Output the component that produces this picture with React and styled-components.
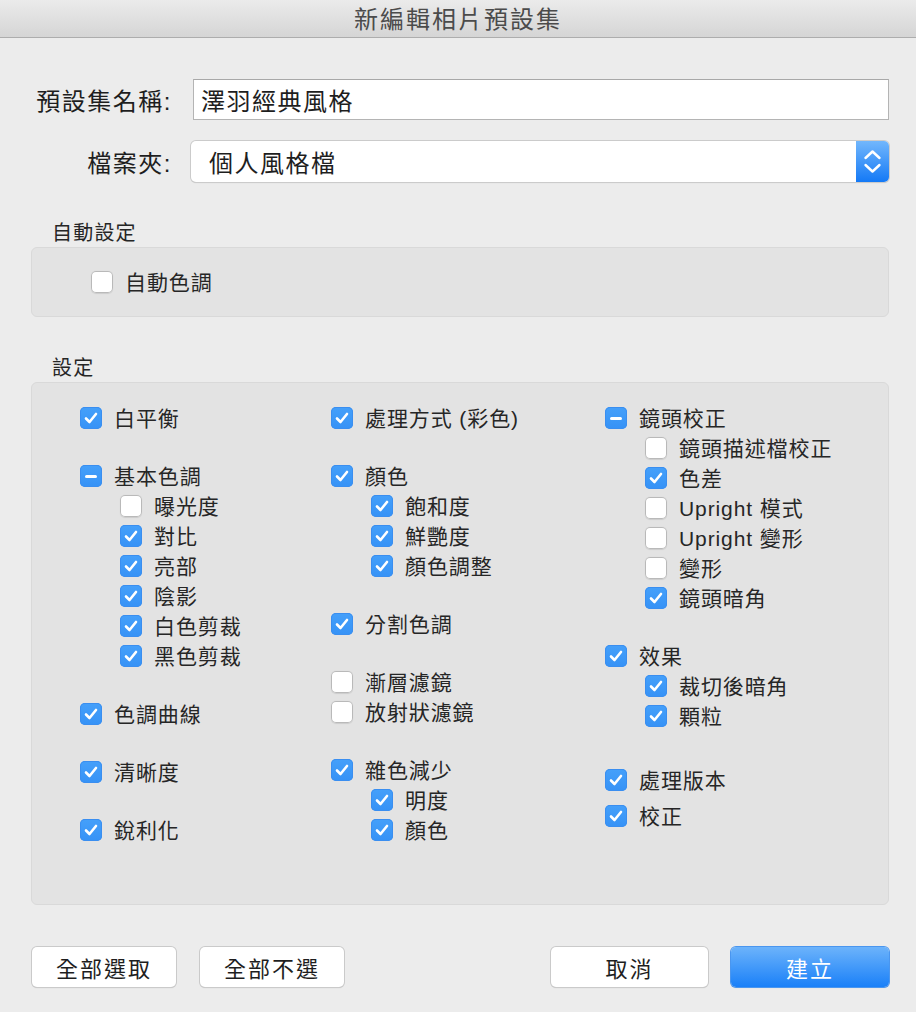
import styled, { createGlobalStyle } from "styled-components";

const GlobalStyle = createGlobalStyle`
    body {
        margin: 0;
        background: #ececec;
    }
    * {
        box-sizing: border-box;
    }
`

const columns = [
    [
        { label: "白平衡", state: "on" },
        { label: "基本色調", state: "mixed", gap: 28 },
        { label: "曝光度", state: "off", sub: true },
        { label: "對比", state: "on", sub: true },
        { label: "亮部", state: "on", sub: true },
        { label: "陰影", state: "on", sub: true },
        { label: "白色剪裁", state: "on", sub: true },
        { label: "黑色剪裁", state: "on", sub: true },
        { label: "色調曲線", state: "on", gap: 28 },
        { label: "清晰度", state: "on", gap: 28 },
        { label: "銳利化", state: "on", gap: 28 },
    ],
    [
        { label: "處理方式 (彩色)", state: "on" },
        { label: "顏色", state: "on", gap: 28 },
        { label: "飽和度", state: "on", sub: true },
        { label: "鮮艷度", state: "on", sub: true },
        { label: "顏色調整", state: "on", sub: true },
        { label: "分割色調", state: "on", gap: 28 },
        { label: "漸層濾鏡", state: "off", gap: 28 },
        { label: "放射狀濾鏡", state: "off" },
        { label: "雜色減少", state: "on", gap: 28 },
        { label: "明度", state: "on", sub: true },
        { label: "顏色", state: "on", sub: true },
    ],
    [
        { label: "鏡頭校正", state: "mixed" },
        { label: "鏡頭描述檔校正", state: "off", sub: true },
        { label: "色差", state: "on", sub: true },
        { label: "Upright 模式", state: "off", sub: true },
        { label: "Upright 變形", state: "off", sub: true },
        { label: "變形", state: "off", sub: true },
        { label: "鏡頭暗角", state: "on", sub: true },
        { label: "效果", state: "on", gap: 28 },
        { label: "裁切後暗角", state: "on", sub: true },
        { label: "顆粒", state: "on", sub: true },
        { label: "處理版本", state: "on", gap: 34 },
        { label: "校正", state: "on", gap: 6 },
    ],
]

function CheckBox({ state }) {
    return (
        <Box $state={state}>
            {state === "on" && (
                <svg width="22" height="22" viewBox="0 0 22 22">
                    <path d="M6 11.5 L9.5 15 L16 7" fill="none" stroke="#fff" strokeWidth="2.6" strokeLinecap="round" strokeLinejoin="round" />
                </svg>
            )}
            {state === "mixed" && <Dash />}
        </Box>
    )
}

export default function App() {
    return (
        <Window>
            <GlobalStyle />
            <TitleBar>新編輯相片預設集</TitleBar>

            <Form>
                <Label>預設集名稱:</Label>
                <TextInput>澤羽經典風格</TextInput>
                <Label>檔案夾:</Label>
                <Select>
                    <SelectValue>個人風格檔</SelectValue>
                    <Stepper>
                        <svg width="33" height="41" viewBox="0 0 33 41">
                            <path d="M9.5 17 L16.5 10.5 L23.5 17" fill="none" stroke="#fff" strokeWidth="2.4" strokeLinecap="round" strokeLinejoin="round" />
                            <path d="M9.5 24 L16.5 30.5 L23.5 24" fill="none" stroke="#fff" strokeWidth="2.4" strokeLinecap="round" strokeLinejoin="round" />
                        </svg>
                    </Stepper>
                </Select>
            </Form>

            <SectionTitle>自動設定</SectionTitle>
            <AutoPanel>
                <Item>
                    <CheckBox state="off" />
                    <ItemLabel>自動色調</ItemLabel>
                </Item>
            </AutoPanel>

            <SectionTitle>設定</SectionTitle>
            <SettingsPanel>
                {columns.map((col, i) => (
                    <Column key={i}>
                        {col.map((item, j) => (
                            <Item key={j} $sub={item.sub} $gap={item.gap || 0}>
                                <CheckBox state={item.state} />
                                <ItemLabel>{item.label}</ItemLabel>
                            </Item>
                        ))}
                    </Column>
                ))}
            </SettingsPanel>

            <Footer>
                <ButtonGroup $gap={24}>
                    <Button $w={144}>全部選取</Button>
                    <Button $w={144}>全部不選</Button>
                </ButtonGroup>
                <ButtonGroup $gap={23}>
                    <Button $w={157}>取消</Button>
                    <Button $w={158} $primary>建立</Button>
                </ButtonGroup>
            </Footer>
        </Window>
    )
}

const Window = styled.div`
    width: 916px;
    height: 1012px;
    overflow: hidden;
    background: #ececec;
    display: flex;
    flex-direction: column;
    font-family: "Liberation Sans", "Noto Sans CJK TC", sans-serif;
    color: #262626;
`

const TitleBar = styled.div`
    height: 38px;
    flex-shrink: 0;
    background: linear-gradient(#ebebeb, #d5d5d5);
    border-bottom: 1px solid #adadad;
    display: flex;
    align-items: center;
    justify-content: center;
    font-size: 24px;
    letter-spacing: 2px;
    color: #4b4b4b;
    padding-bottom: 2px;
`

const Form = styled.div`
    margin-top: 41px;
    padding-right: 27px;
    display: grid;
    grid-template-columns: 172px 1fr;
    column-gap: 20px;
    row-gap: 21px;
    align-items: center;
`

const Label = styled.div`
    text-align: right;
    font-size: 24px;
    letter-spacing: 1.5px;
    color: #1e1e1e;
`

const TextInput = styled.div`
    height: 41px;
    margin-left: 1px;
    background: #fff;
    border: 1px solid #b4b4b4;
    border-top-color: #a8a8a8;
    padding-left: 7px;
    display: flex;
    align-items: center;
    font-size: 24px;
    letter-spacing: 1.5px;
    color: #1e1e1e;
`

const Select = styled.div`
    height: 41px;
    margin-left: -1px;
    background: #fff;
    border-radius: 5px;
    box-shadow: 0 0 0 1px #cbcbcb, 0 1px 1px rgba(0, 0, 0, 0.18);
    display: flex;
    overflow: hidden;
`

const SelectValue = styled.div`
    flex: 1;
    padding-left: 18px;
    display: flex;
    align-items: center;
    font-size: 24px;
    letter-spacing: 1.5px;
    color: #1e1e1e;
`

const Stepper = styled.div`
    width: 33px;
    height: 41px;
    background: linear-gradient(#72b7fc, #1479f6);
    display: flex;
`

const SectionTitle = styled.div`
    margin-top: 39px;
    margin-left: 52px;
    height: 24px;
    line-height: 24px;
    font-size: 20px;
    letter-spacing: 1.2px;
    color: #262626;
`

const Panel = styled.div`
    margin: 2px 27px 0 31px;
    background: #e3e3e3;
    border: 1px solid #d9d9d9;
    border-radius: 6px;
`

const AutoPanel = styled(Panel)`
    height: 70px;
    padding-left: 59px;
    display: flex;
    align-items: center;
`

const SettingsPanel = styled(Panel)`
    height: 523px;
    padding: 20px 0 0 48px;
    display: grid;
    grid-template-columns: 251px 274px 1fr;
    align-items: start;
`

const Column = styled.div`
    display: flex;
    flex-direction: column;
`

const Item = styled.div`
    height: 30px;
    display: flex;
    align-items: center;
    padding-left: ${p => (p.$sub ? 40 : 0)}px;
    margin-top: ${p => p.$gap || 0}px;
`

const Box = styled.div`
    width: 22px;
    height: 22px;
    flex-shrink: 0;
    border-radius: 5px;
    display: flex;
    align-items: center;
    justify-content: center;
    background: ${p => (p.$state === "off" ? "#fff" : "linear-gradient(#45a0fa, #3692f6)")};
    box-shadow: ${p => (p.$state === "off"
        ? "inset 0 0 0 1px #b9b9b9, 0 0.5px 1px rgba(0,0,0,0.1)"
        : "inset 0 0 0 1px #3a8ef0")};
`

const Dash = styled.div`
    width: 12px;
    height: 3px;
    border-radius: 2px;
    background: #fff;
`

const ItemLabel = styled.span`
    margin-left: 12px;
    padding-bottom: 3px;
    font-size: 21px;
    letter-spacing: 0.9px;
    white-space: nowrap;
    color: #262626;
`

const Footer = styled.div`
    margin-top: 42px;
    padding: 0 27px 0 32px;
    display: flex;
    justify-content: space-between;
`

const ButtonGroup = styled.div`
    display: flex;
    gap: ${p => p.$gap}px;
`

const Button = styled.button`
    width: ${p => p.$w}px;
    height: 40px;
    border-radius: 5px;
    border: none;
    font-family: inherit;
    font-size: 22px;
    letter-spacing: 2px;
    cursor: pointer;
    color: ${p => (p.$primary ? "#fff" : "#1e1e1e")};
    background: ${p => (p.$primary ? "linear-gradient(#6cb3fb, #1a80f8)" : "#fff")};
    box-shadow: ${p => (p.$primary
        ? "0 0 0 1px #4a96ef, 0 1px 1px rgba(0,0,0,0.15)"
        : "0 0 0 1px #cacaca, 0 1px 1px rgba(0,0,0,0.2)")};
`
